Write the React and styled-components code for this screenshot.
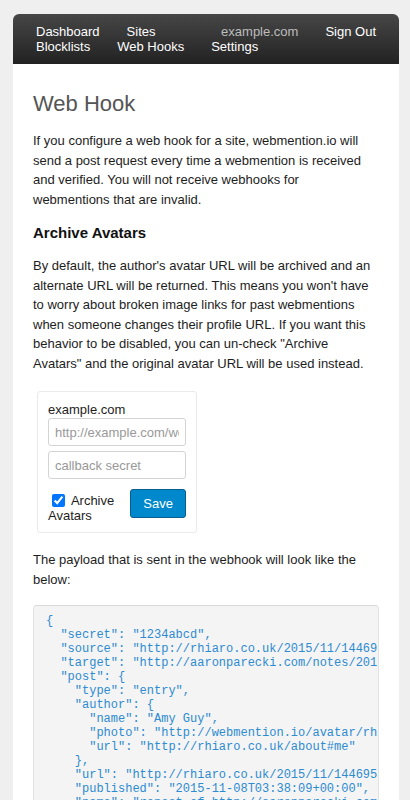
import React from 'react'
import styled, { createGlobalStyle } from 'styled-components'

const GlobalStyle = createGlobalStyle`
  html, body {
    margin: 0;
    padding: 0;
    background: #efefef;
  }
  body {
    font-family: "Liberation Sans", Arial, sans-serif;
    font-size: 13px;
    color: #1d1d1d;
  }
`

const payload = `{
  "secret": "1234abcd",
  "source": "http://rhiaro.co.uk/2015/11/1446953889",
  "target": "http://aaronparecki.com/notes/2015/11/07/4/indiewebcamp",
  "post": {
    "type": "entry",
    "author": {
      "name": "Amy Guy",
      "photo": "http://webmention.io/avatar/rhiaro.co.uk/829d3f7f3c7ef0d3d5b4.png",
      "url": "http://rhiaro.co.uk/about#me"
    },
    "url": "http://rhiaro.co.uk/2015/11/1446953889",
    "published": "2015-11-08T03:38:09+00:00",
    "name": "repost of http://aaronparecki.com/notes/2015/11/07/4/indiewebcamp",
    "repost-of": "http://aaronparecki.com/notes/2015/11/07/4/indiewebcamp",
    "wm-property": "repost-of"
  }
}`

const App = () => {
  return (
    <>
      <GlobalStyle />
      <Page>
        <Container>
          <NavBar>
            <NavRow>
              <NavLink>Dashboard</NavLink>
              <NavLink>Sites</NavLink>
              <NavLink $muted $push>example.com</NavLink>
              <NavLink>Sign Out</NavLink>
            </NavRow>
            <NavRow>
              <NavLink>Blocklists</NavLink>
              <NavLink>Web Hooks</NavLink>
              <NavLink>Settings</NavLink>
            </NavRow>
          </NavBar>

          <Content>
            <Title>Web Hook</Title>
            <Text>
              If you configure a web hook for a site, webmention.io will send a
              post request every time a webmention is received and verified.
              You will not receive webhooks for webmentions that are invalid.
            </Text>

            <SubTitle>Archive Avatars</SubTitle>
            <Text>
              By default, the author's avatar URL will be archived and an
              alternate URL will be returned. This means you won't have to
              worry about broken image links for past webmentions when someone
              changes their profile URL. If you want this behavior to be
              disabled, you can un-check "Archive Avatars" and the original
              avatar URL will be used instead.
            </Text>

            {/* site form */}
            <HookForm>
              <SiteName>example.com</SiteName>
              <Field placeholder='http://example.com/webhook' />
              <Field placeholder='callback secret' />
              <FormRow>
                <CheckLabel>
                  <input type='checkbox' defaultChecked /> Archive Avatars
                </CheckLabel>
                <SaveButton type='button'>Save</SaveButton>
              </FormRow>
            </HookForm>

            <Text>The payload that is sent in the webhook will look like the below:</Text>
            <Code>{payload}</Code>
          </Content>
        </Container>
      </Page>
    </>
  )
}

const Page = styled.div`
  height: 800px;
  box-sizing: border-box;
  overflow: hidden;
  padding: 14px 11px 0 13px;
`

const Container = styled.div`
  background: #fff;
  border-radius: 6px 6px 0 0;
  min-height: 786px;
`

const NavBar = styled.nav`
  display: flex;
  flex-direction: column;
  padding: 10px 23px;
  border-radius: 6px 6px 0 0;
  background: linear-gradient(#464646, #222);
`

const NavRow = styled.div`
  display: flex;
  gap: 27px;
  line-height: 15px;
`

const NavLink = styled.a`
  font-size: 13px;
  color: ${(p) => (p.$muted ? '#bdbdbd' : '#fff')};
  margin-left: ${(p) => (p.$push ? 'auto' : '0')};
  text-decoration: none;
  white-space: nowrap;
`

const Content = styled.main`
  padding: 28px 20px 0;
`

const Title = styled.h1`
  margin: 0 0 15px;
  font-size: 22px;
  line-height: 24px;
  font-weight: normal;
  color: #555;
`

const SubTitle = styled.h2`
  margin: 15px 0 14px;
  font-size: 15px;
  line-height: 18px;
  font-weight: bold;
  color: #111;
`

const Text = styled.p`
  margin: 0;
  line-height: 1.5;
`

const HookForm = styled.form`
  box-sizing: border-box;
  width: 160px;
  margin: 18px 0 17px 4px;
  padding: 10px 10px 9px;
  border: 1px solid #eaeaea;
  border-radius: 3px;
  display: flex;
  flex-direction: column;
`

const SiteName = styled.div`
  line-height: 16px;
`

const Field = styled.input`
  box-sizing: border-box;
  width: 100%;
  height: 28px;
  margin-top: 5px;
  &:first-of-type {
    margin-top: 0;
  }
  padding: 0 6px;
  border: 1px solid #d4d4d4;
  border-radius: 3px;
  font-family: "Liberation Sans", Arial, sans-serif;
  font-size: 13px;
  color: #333;
  &::placeholder {
    color: #999;
  }
`

const FormRow = styled.div`
  display: flex;
  align-items: flex-start;
  gap: 5px;
  margin-top: 10px;
`

const CheckLabel = styled.label`
  flex: 1;
  padding-top: 4px;
  line-height: 15px;
  input {
    width: 13px;
    height: 13px;
    margin: 0 3px 0 4px;
    vertical-align: -2px;
    accent-color: #0075ff;
  }
`

const SaveButton = styled.button`
  height: 29px;
  padding: 0 12px;
  border: 1px solid #0b5d8f;
  border-radius: 3px;
  background: #0088cc;
  color: #fff;
  font-family: "Liberation Sans", Arial, sans-serif;
  font-size: 13px;
`

const Code = styled.pre`
  margin: 16px 0 0;
  padding: 8px 12px;
  background: #f4f4f4;
  border: 1px solid #e2e2e2;
  border-top-color: #d8d8d8;
  border-radius: 4px;
  overflow: hidden;
  font-family: "Liberation Mono", "Courier New", monospace;
  font-size: 12px;
  line-height: 14px;
  color: #2d8bd1;
`

export default App
